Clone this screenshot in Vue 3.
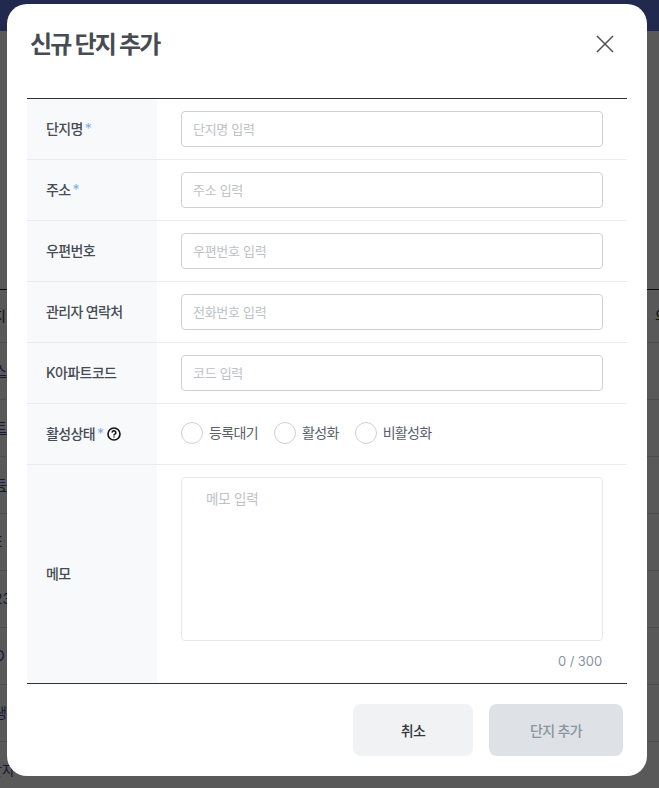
<script setup>
const fields = [
  { label: '단지명', required: true, placeholder: '단지명 입력' },
  { label: '주소', required: true, placeholder: '주소 입력' },
  { label: '우편번호', required: false, placeholder: '우편번호 입력' },
  { label: '관리자 연락처', required: false, placeholder: '전화번호 입력' },
  { label: 'K아파트코드', required: false, placeholder: '코드 입력' },
]
const states = ['등록대기', '활성화', '비활성화']
const bgRows = [
  { text: '스', link: true },
  { text: '트', link: true },
  { text: '등', link: true },
  { text: 'E', link: false },
  { text: '23', link: false },
  { text: 'O', link: false },
  { text: '생', link: false },
  { text: '단자', link: false, wide: true },
]
</script>

<template>
  <div class="page">
    <div class="topbar"></div>
    <div class="bg-table">
      <div class="bg-head"><span class="bg-left">지</span><span class="bg-right">의</span></div>
      <div v-for="r in bgRows" :key="r.text" class="bg-row">
        <span :class="{ link: r.link, wide: r.wide }">{{ r.text }}</span>
      </div>
    </div>
    <div class="overlay"></div>
    <div class="modal">
      <header class="modal-head">
        <h2>신규 단지 추가</h2>
        <button class="close" type="button" aria-label="닫기">
          <svg width="18" height="18" viewBox="0 0 18 18" fill="none" stroke="#4b5057" stroke-width="1.5">
            <path d="M1 1 17 17M17 1 1 17" />
          </svg>
        </button>
      </header>
      <div class="form">
        <div v-for="f in fields" :key="f.label" class="row">
          <div class="th">{{ f.label }}<em v-if="f.required">*</em></div>
          <div class="td"><input class="input" :placeholder="f.placeholder" /></div>
        </div>
        <div class="row">
          <div class="th">활성상태<em>*</em>
            <svg class="help" width="14" height="14" viewBox="0 0 14 14" fill="none" stroke="#111" stroke-width="1.6">
              <circle cx="7" cy="7" r="6" />
              <path d="M5.2 5.6a1.8 1.8 0 1 1 2.7 1.5c-.6.4-.9.7-.9 1.3" />
              <path d="M7 9.4v1.2" />
            </svg>
          </div>
          <div class="td radios">
            <label v-for="s in states" :key="s" class="radio"><span class="dot"></span><span class="radio-text">{{ s }}</span></label>
          </div>
        </div>
        <div class="row memo">
          <div class="th">메모</div>
          <div class="td memo-td">
            <textarea class="area" placeholder="메모 입력"></textarea>
            <div class="count">0 / 300</div>
          </div>
        </div>
      </div>
      <footer class="foot">
        <button class="btn cancel" type="button">취소</button>
        <button class="btn submit" type="button">단지 추가</button>
      </footer>
    </div>
  </div>
</template>

<style>
html, body { margin: 0; height: 100%; overflow: hidden; }
</style>

<style scoped>
.page {
  position: relative;
  width: 659px;
  height: 788px;
  overflow: hidden;
  background: #fff;
  font-family: Inter, "Noto Sans CJK KR", sans-serif;
  color: #1b1d20;
}
.topbar { height: 31px; background: #5f78e0; }
.bg-table { padding-top: 258px; font-size: 14px; color: #3a4a9a; }
.bg-head {
  height: 54px;
  border-top: 1px solid #222;
  border-bottom: 1px solid #ddd;
  display: flex;
  justify-content: space-between;
  align-items: center;
  padding-bottom: 2px;
  color: #333;
  box-sizing: border-box;
}
.bg-left { margin-left: -7px; }
.bg-right { margin-right: -9px; }
.bg-row {
  height: 57px;
  border-bottom: 1px solid #ddd;
  display: flex;
  align-items: center;
  padding-bottom: 2px;
  box-sizing: border-box;
}
.bg-row span { margin-left: -6px; }
.bg-row .link { text-decoration: underline; }
.bg-row .wide { margin-left: -11px; }
.overlay { position: absolute; inset: 0; background: rgba(0, 0, 0, 0.65); }
.modal {
  position: absolute;
  left: 7px;
  top: 4px;
  width: 640px;
  height: 772px;
  background: #fff;
  border-radius: 20px;
  box-sizing: border-box;
  padding: 0 20px;
  display: flex;
  flex-direction: column;
}
.modal-head {
  height: 94px;
  flex: none;
  display: flex;
  justify-content: space-between;
  padding: 24px 6px 0 3px;
  box-sizing: border-box;
}
h2 {
  margin: 1px 0 0;
  font-size: 24px;
  line-height: 32px;
  font-weight: 700;
  letter-spacing: -1.8px;
  color: #464c53;
}
.close {
  width: 32px;
  height: 32px;
  padding: 0;
  border: 0;
  background: none;
  display: flex;
  align-items: center;
  justify-content: center;
}
.form { border-top: 1px solid #2f3237; border-bottom: 1px solid #2f3237; }
.row {
  display: flex;
  height: 61px;
  border-bottom: 1px solid #e9ebee;
  box-sizing: border-box;
}
.row.memo { height: 218px; border-bottom: 0; }
.th {
  width: 130px;
  flex: none;
  box-sizing: border-box;
  padding: 0 0 2px 19px;
  background: #f8f9fb;
  display: flex;
  align-items: center;
  font-size: 14px;
  font-weight: 500;
  letter-spacing: -0.65px;
  color: #464c53;
}
.th em { font-style: normal; color: #7fb0ea; margin-left: 2px; font-weight: 400; }
.help { margin: 2px 0 0 4px; }
.td {
  flex: 1;
  padding: 0 24px;
  display: flex;
  align-items: center;
  box-sizing: border-box;
}
.input {
  width: 100%;
  height: 36px;
  box-sizing: border-box;
  border: 1px solid #cdd1d5;
  border-radius: 4px;
  padding: 0 11px 1px;
  font: 400 13px Inter, "Noto Sans CJK KR", sans-serif;
  letter-spacing: -0.3px;
  outline: none;
}
.input::placeholder, .area::placeholder { color: #bcc2c8; opacity: 1; }
.radios { gap: 16px; padding-bottom: 2px; }
.radio {
  display: flex;
  align-items: center;
  gap: 6px;
  font-size: 14px;
  letter-spacing: -0.65px;
  color: #58616a;
}
.radio-text { margin-bottom: 2px; }
.dot {
  width: 22px;
  height: 22px;
  box-sizing: border-box;
  border: 1px solid #cdd1d5;
  border-radius: 50%;
}
.memo-td { flex-direction: column; align-items: stretch; padding-top: 12px; }
.area {
  height: 164px;
  flex: none;
  box-sizing: border-box;
  border: 1px solid #e6e8ea;
  border-radius: 4px;
  padding: 11px 24px;
  resize: none;
  font: 400 13.5px/20px Inter, "Noto Sans CJK KR", sans-serif;
  letter-spacing: -0.2px;
  outline: none;
}
.count {
  margin-top: 11px;
  padding-right: 1px;
  text-align: right;
  font-size: 13px;
  line-height: 18px;
  letter-spacing: -0.1px;
  color: #8a949e;
}
.foot { display: flex; justify-content: flex-end; gap: 16px; padding: 20px 4px 0 0; }
.btn {
  height: 52px;
  border: 0;
  border-radius: 8px;
  font: 500 14px Inter, "Noto Sans CJK KR", sans-serif;
  letter-spacing: -0.7px;
}
.cancel { width: 120px; background: #f1f2f4; color: #33363d; }
.submit { width: 134px; background: #dee1e5; color: #8a949e; }
</style>
